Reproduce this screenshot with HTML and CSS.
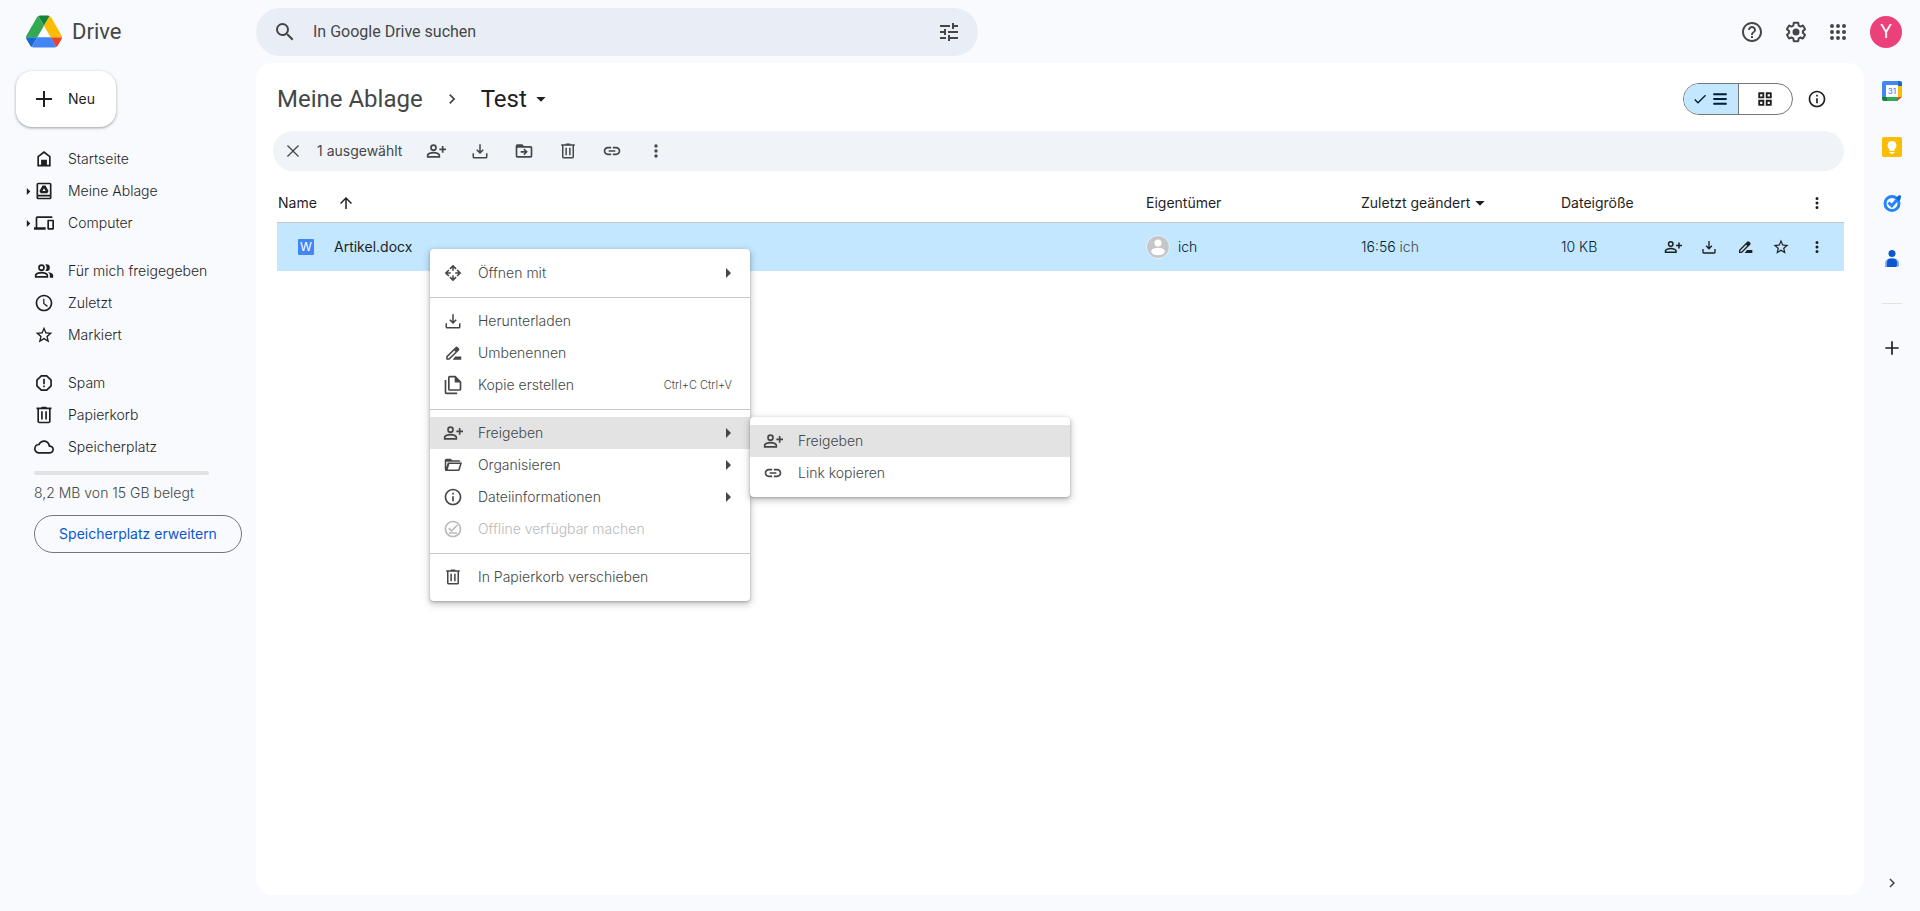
FILE: index.html
```html
<!DOCTYPE html>
<html lang="de">
<head>
<meta charset="utf-8">
<title>Test – Google Drive</title>
<link rel="stylesheet" href="styles.css">
</head>
<body>
<svg class="sprite" aria-hidden="true">
  <symbol id="search" viewBox="0 0 24 24"><path d="M15.5 14h-.79l-.28-.27A6.471 6.471 0 0 0 16 9.5 6.5 6.5 0 1 0 9.5 16c1.61 0 3.09-.59 4.23-1.57l.27.28v.79l5 4.99L20.49 19l-4.99-5zm-6 0C7.01 14 5 11.99 5 9.5S7.01 5 9.5 5 14 7.01 14 9.5 11.99 14 9.5 14z"/></symbol>
  <symbol id="tune" viewBox="0 0 24 24"><path d="M3 17v2h6v-2H3zM3 5v2h10V5H3zm10 16v-2h8v-2h-8v-2h-2v6h2zM7 9v2H3v2h4v2h2V9H7zm14 4v-2H11v2h10zm-6-4h2V7h4V5h-4V3h-2v6z"/></symbol>
  <symbol id="help" viewBox="0 0 24 24"><path d="M11 18h2v-2h-2v2zm1-16C6.48 2 2 6.48 2 12s4.48 10 10 10 10-4.48 10-10S17.52 2 12 2zm0 18c-4.41 0-8-3.59-8-8s3.59-8 8-8 8 3.59 8 8-3.59 8-8 8zm0-14c-2.21 0-4 1.79-4 4h2c0-1.1.9-2 2-2s2 .9 2 2c0 2-3 1.75-3 5h2c0-2.25 3-2.5 3-5 0-2.21-1.79-4-4-4z"/></symbol>
  <symbol id="settings" viewBox="0 0 24 24"><path d="M13.85 22.25h-3.7c-.74 0-1.36-.54-1.45-1.27l-.27-1.89c-.27-.14-.53-.29-.79-.46l-1.8.72c-.7.26-1.47-.03-1.81-.65L2.2 15.53c-.35-.66-.2-1.44.36-1.88l1.53-1.19c-.01-.15-.02-.3-.02-.46 0-.15.01-.31.02-.46l-1.52-1.19c-.59-.45-.74-1.26-.37-1.88l1.85-3.19c.34-.62 1.11-.9 1.79-.63l1.81.73c.26-.17.52-.32.78-.46l.27-1.91c.09-.7.71-1.25 1.44-1.25h3.7c.74 0 1.36.54 1.45 1.27l.27 1.89c.27.14.53.29.79.46l1.8-.72c.71-.26 1.48.03 1.82.65l1.84 3.18c.36.66.2 1.44-.36 1.88l-1.52 1.19c.01.15.02.3.02.46s-.01.31-.02.46l1.52 1.19c.56.45.72 1.23.37 1.86l-1.86 3.22c-.34.62-1.11.9-1.8.63l-1.8-.72c-.26.17-.52.32-.78.46l-.27 1.91c-.1.68-.72 1.22-1.46 1.22zm-3.23-2h2.76l.37-2.55.53-.22c.44-.18.88-.44 1.34-.78l.45-.34 2.38.96 1.38-2.4-2.03-1.58.07-.56c.03-.26.06-.51.06-.78s-.03-.53-.06-.78l-.07-.56 2.03-1.58-1.39-2.4-2.39.96-.45-.35c-.42-.32-.87-.58-1.33-.77l-.52-.22-.37-2.55h-2.76l-.37 2.55-.53.21c-.44.19-.88.44-1.34.79l-.45.33-2.38-.95-1.39 2.39 2.03 1.58-.07.56a7 7 0 0 0-.06.79c0 .26.02.53.06.78l.07.56-2.03 1.58 1.38 2.4 2.39-.96.45.35c.43.33.86.58 1.33.77l.53.22.38 2.55z"/><circle cx="12" cy="12" r="3.5"/></symbol>
  <symbol id="apps" viewBox="0 0 24 24"><path d="M6 8a2 2 0 1 0 0-4 2 2 0 0 0 0 4zm6 0a2 2 0 1 0 0-4 2 2 0 0 0 0 4zm6 0a2 2 0 1 0 0-4 2 2 0 0 0 0 4zM6 14a2 2 0 1 0 0-4 2 2 0 0 0 0 4zm6 0a2 2 0 1 0 0-4 2 2 0 0 0 0 4zm6 0a2 2 0 1 0 0-4 2 2 0 0 0 0 4zM6 20a2 2 0 1 0 0-4 2 2 0 0 0 0 4zm6 0a2 2 0 1 0 0-4 2 2 0 0 0 0 4zm6 0a2 2 0 1 0 0-4 2 2 0 0 0 0 4z"/></symbol>
  <symbol id="plus" viewBox="0 0 24 24"><path d="M20 13h-7v7h-2v-7H4v-2h7V4h2v7h7z"/></symbol>
  <symbol id="home" viewBox="0 0 24 24"><path fill-rule="evenodd" d="M12 2.5 4 8.7V21h16V8.700zM6 9.700 12 5l6 4.700V19H6zM8.500 13h7v6h-7z"/></symbol>
  <symbol id="mydrive" viewBox="0 0 24 24"><path fill-rule="evenodd" d="M19 2H5a2 2 0 0 0-2 2v16a2 2 0 0 0 2 2h14a2 2 0 0 0 2-2V4a2 2 0 0 0-2-2zm0 18H5v-1.500h14zm0-3.500H5V4h14zM10.300 5.500h3.400L17.500 12l-1.600 2.700H8.100L6.500 12zM12 8.800l-1.900 3.200h3.800z"/></symbol>
  <symbol id="devices" viewBox="0 0 24 24"><path d="M4 6h18V4H4c-1.100 0-2 .9-2 2v11H0v3h14v-3H4V6zm19 2h-6c-.55 0-1 .45-1 1v10c0 .55.45 1 1 1h6c.55 0 1-.45 1-1V9c0-.55-.45-1-1-1zm-1 10h-4v-8h4v8z"/></symbol>
  <symbol id="people" viewBox="0 0 24 24"><path fill-rule="evenodd" d="M9 12a4 4 0 1 0 0-8 4 4 0 0 0 0 8zm0-6a2 2 0 1 1 0 4 2 2 0 0 1 0-4zm0 7c-2.670 0-8 1.340-8 4v3h16v-3c0-2.660-5.330-4-8-4zm6 5H3v-.990C3.200 16.290 6.300 15 9 15s5.800 1.290 6 2zM15 12a4 4 0 0 0 0-8c-.470 0-.910.100-1.330.240a5.980 5.980 0 0 1 0 7.520c.420.140.860.240 1.330.240zm1.660 1.130C18.030 14.060 19 15.320 19 17v3h4v-3c0-2.180-3.580-3.470-6.340-3.870z"/></symbol>
  <symbol id="clock" viewBox="0 0 24 24"><path d="M11.990 2C6.470 2 2 6.480 2 12s4.470 10 9.990 10C17.520 22 22 17.520 22 12S17.520 2 11.990 2zM12 20c-4.420 0-8-3.580-8-8s3.580-8 8-8 8 3.580 8 8-3.580 8-8 8zm.5-13H11v6l4.700 3.700.9-1.300-4.100-3.150z"/></symbol>
  <symbol id="star" viewBox="0 0 24 24"><path d="M22 9.240l-7.190-.62L12 2 9.190 8.630 2 9.240l5.460 4.730L5.820 21 12 17.270 18.180 21l-1.630-7.030L22 9.240zM12 15.400l-3.760 2.270 1-4.280-3.320-2.880 4.380-.38L12 6.100l1.710 4.040 4.380.38-3.320 2.880 1 4.280L12 15.400z"/></symbol>
  <symbol id="spam" viewBox="0 0 24 24"><path fill-rule="evenodd" d="M8.400 2.500h7.200L21.500 8v8l-5.900 5.500H8.400L2.500 16V8zM9.200 4.500 4.500 9v6l4.700 4.500h5.600l4.700-4.500V9l-4.700-4.500zM11 7h2v6.500h-2zm0 8h2v2h-2z"/></symbol>
  <symbol id="trash" viewBox="0 0 24 24"><path fill-rule="evenodd" d="M15 3V2H9v1H3v2h1v14.500A2.500 2.500 0 0 0 6.500 22h11a2.500 2.500 0 0 0 2.500-2.500V5h1V3zm3 17H6V5h12zM8.500 7.500h2v10h-2zm5 0h2v10h-2z"/></symbol>
  <symbol id="cloud" viewBox="0 0 24 24"><path d="M19.350 10.040C18.670 6.590 15.640 4 12 4 9.110 4 6.600 5.640 5.350 8.040 2.340 8.360 0 10.910 0 14c0 3.310 2.690 6 6 6h13c2.760 0 5-2.240 5-5 0-2.640-2.050-4.780-4.650-4.960zM19 18H6c-2.210 0-4-1.790-4-4 0-2.050 1.530-3.760 3.560-3.970l1.070-.11.500-.95C8.080 7.140 9.940 6 12 6c2.620 0 4.880 1.860 5.390 4.430l.300 1.500 1.530.110c1.560.100 2.780 1.410 2.780 2.960 0 1.650-1.350 3-3 3z"/></symbol>
  <symbol id="chevron" viewBox="0 0 24 24"><path d="M10 6 8.590 7.410 13.170 12l-4.580 4.590L10 18l6-6z"/></symbol>
  <symbol id="down" viewBox="0 0 24 24"><path d="M5 9h14l-7 7z"/></symbol>
  <symbol id="right" viewBox="0 0 10 10"><path d="M4 0v10l5-5z"/></symbol>
  <symbol id="check" viewBox="0 0 24 24"><path d="M9 16.170 4.830 12l-1.420 1.410L9 19 21 7l-1.410-1.410z"/></symbol>
  <symbol id="list" viewBox="0 0 24 24"><path d="M4 5h16v2.500H4zm0 5.750h16v2.500H4zm0 5.750h16V19H4z"/></symbol>
  <symbol id="grid" viewBox="0 0 24 24"><path fill-rule="evenodd" d="M4 3h7v8H3V4a1 1 0 0 1 1-1zm1.500 2.500v3h3v-3zM13 3h7a1 1 0 0 1 1 1v7h-8zm2.500 2.500v3h3v-3zM3 13h8v8H4a1 1 0 0 1-1-1zm2.500 2.500v3h3v-3zM13 13h8v7a1 1 0 0 1-1 1h-7zm2.500 2.500v3h3v-3z"/></symbol>
  <symbol id="info" viewBox="0 0 24 24"><path d="M11 7h2v2h-2zm0 4h2v6h-2zm1-9C6.480 2 2 6.480 2 12s4.480 10 10 10 10-4.480 10-10S17.520 2 12 2zm0 18c-4.410 0-8-3.590-8-8s3.590-8 8-8 8 3.590 8 8-3.590 8-8 8z"/></symbol>
  <symbol id="close" viewBox="0 0 24 24"><path d="M20 5.200 18.800 4 12 10.800 5.200 4 4 5.200l6.800 6.800L4 18.800 5.200 20l6.800-6.800 6.800 6.800 1.200-1.200-6.800-6.800z"/></symbol>
  <symbol id="share" viewBox="0 0 24 24"><path fill-rule="evenodd" d="M9 12a4 4 0 1 0 0-8 4 4 0 0 0 0 8zm0-6a2 2 0 1 1 0 4 2 2 0 0 1 0-4zm0 7c-2.670 0-8 1.340-8 4v3h16v-3c0-2.660-5.330-4-8-4zm6 5H3v-.990C3.200 16.290 6.300 15 9 15s5.800 1.290 6 2zM19 6h2v3h3v2h-3v3h-2v-3h-3V9h3z"/></symbol>
  <symbol id="download" viewBox="0 0 24 24"><path d="m12 16-5-5 1.400-1.450 2.600 2.600V3h2v9.150l2.600-2.600L17 11zM4 20v-5H2v5a2 2 0 0 0 2 2h16a2 2 0 0 0 2-2v-5h-2v5z"/></symbol>
  <symbol id="move" viewBox="0 0 24 24"><path fill-rule="evenodd" d="M20 6h-8l-2-2H4a2 2 0 0 0-2 2v12a2 2 0 0 0 2 2h16a2 2 0 0 0 2-2V8a2 2 0 0 0-2-2zm0 12H4V8h16zm-7.500-9 4 4-4 4-1.300-1.300 1.700-1.700H8v-2h4.900l-1.700-1.700z"/></symbol>
  <symbol id="link" viewBox="0 0 24 24"><path d="M17 7h-4v2h4c1.650 0 3 1.350 3 3s-1.350 3-3 3h-4v2h4c2.760 0 5-2.240 5-5s-2.240-5-5-5zm-6 8H7c-1.650 0-3-1.350-3-3s1.350-3 3-3h4V7H7c-2.760 0-5 2.240-5 5s2.240 5 5 5h4v-2zm-3-4h8v2H8z"/></symbol>
  <symbol id="more" viewBox="0 0 24 24"><path d="M12 8a2 2 0 1 0 0-4 2 2 0 0 0 0 4zm0 2a2 2 0 1 0 0 4 2 2 0 0 0 0-4zm0 6a2 2 0 1 0 0 4 2 2 0 0 0 0-4z"/></symbol>
  <symbol id="up" viewBox="0 0 24 24"><path d="m4 12 1.410 1.410L11 7.830V20h2V7.830l5.580 5.590L20 12l-8-8z"/></symbol>
  <symbol id="rename" viewBox="0 0 24 24"><path fill-rule="evenodd" d="M15.200 4.200a2.300 2.300 0 0 1 3.200 0l1.400 1.400a2.300 2.300 0 0 1 0 3.200L7.300 21H3v-4.600zM13.700 8.500 5 17.200V19h1.500l8.800-8.800zM15 16.500h8V21H11.500z"/></symbol>
  <symbol id="openwith" viewBox="0 0 24 24"><path d="m12 1 4.800 4.800-1.500 1.500L13 5v4h-2V5L8.700 7.300 7.200 5.800zM1 12l4.800-4.800 1.500 1.500L5 11h4v2H5l2.300 2.300-1.500 1.500zm22 0-4.800 4.800-1.500-1.500L19 13h-4v-2h4l-2.300-2.300 1.500-1.500zM12 23l-4.800-4.800 1.500-1.500L11 19v-4h2v4l2.300-2.300 1.500 1.500z"/></symbol>
  <symbol id="copy" viewBox="0 0 24 24"><path fill-rule="evenodd" d="M15 1H8a2 2 0 0 0-2 2v14a2 2 0 0 0 2 2h12a2 2 0 0 0 2-2V8zm5 16H8V3h6v6h6zM2 6h2v15h13v2H4a2 2 0 0 1-2-2z"/></symbol>
  <symbol id="folder" viewBox="0 0 24 24"><path fill-rule="evenodd" d="M3 20a2 2 0 0 1-2-2V5.500a2 2 0 0 1 2-2h6l2 2h9a2 2 0 0 1 2 2H3V15l2-6.500h19L21 18.600a2 2 0 0 1-1.900 1.400zm2-2h14l2.300-7.500H7.200z"/></symbol>
  <symbol id="offline" viewBox="0 0 24 24"><path d="M12 2C6.500 2 2 6.500 2 12s4.500 10 10 10 10-4.500 10-10S17.500 2 12 2zm0 18c-4.420 0-8-3.580-8-8s3.580-8 8-8 8 3.580 8 8-3.580 8-8 8zm4.600-13.500L10.200 12.900 7.600 10.300 6.200 11.700l4 4L18 7.900zM7 15.800h10v2H7z"/></symbol>
</svg>

<header class="topbar">
  <a class="brand" href="#">
    <svg class="logo" viewBox="0 0 87.300 78" aria-hidden="true">
      <path d="M6.600 66.850l3.850 6.650c.8 1.400 1.950 2.500 3.300 3.300l13.750-23.800h-27.500c0 1.550.4 3.100 1.200 4.500z" fill="#1967d2"/>
      <path d="M43.650 25l-13.750-23.800c-1.350.8-2.500 1.900-3.300 3.300l-25.400 44a9.060 9.060 0 0 0-1.200 4.500h27.500z" fill="#34a853"/>
      <path d="M73.550 76.800c1.350-.8 2.500-1.900 3.300-3.300l1.600-2.750 7.650-13.250c.8-1.400 1.200-2.950 1.200-4.500h-27.500l5.850 11.500z" fill="#ea4335"/>
      <path d="M43.650 25l13.750-23.800c-1.350-.8-2.900-1.200-4.500-1.200h-18.500c-1.600 0-3.150.45-4.500 1.200z" fill="#188038"/>
      <path d="M59.800 53h-32.300l-13.750 23.800c1.350.8 2.900 1.200 4.500 1.200h50.800c1.600 0 3.150-.45 4.500-1.200z" fill="#4285f4"/>
      <path d="M73.400 26.500l-12.700-22c-.8-1.400-1.950-2.500-3.300-3.300l-13.750 23.800 16.150 28h27.450c0-1.550-.4-3.100-1.200-4.500z" fill="#fbbc04"/>
    </svg>
    <span>Drive</span>
  </a>
  <form class="search" role="search">
    <button type="button" class="icon-btn" aria-label="Suchen"><svg class="i24"><use href="#search"/></svg></button>
    <input type="search" aria-label="In Google Drive suchen" placeholder="In Google Drive suchen">
    <button type="button" class="icon-btn" aria-label="Suchoptionen"><svg class="i24"><use href="#tune"/></svg></button>
  </form>
  <div class="account">
    <button class="icon-btn" aria-label="Hilfe"><svg class="i24"><use href="#help"/></svg></button>
    <button class="icon-btn" aria-label="Einstellungen"><svg class="i24"><use href="#settings"/></svg></button>
    <button class="icon-btn narrow" aria-label="Google-Apps"><svg class="i24"><use href="#apps"/></svg></button>
    <button class="avatar">Y</button>
  </div>
</header>

<div class="frame">
  <aside class="sidebar">
    <button class="new-btn"><svg class="i24"><use href="#plus"/></svg>Neu</button>
    <nav class="nav">
      <ul>
        <li><a href="#"><i></i><svg class="i20"><use href="#home"/></svg>Startseite</a></li>
        <li><a href="#"><svg class="tick"><use href="#right"/></svg><svg class="i20"><use href="#mydrive"/></svg>Meine Ablage</a></li>
        <li><a href="#"><svg class="tick"><use href="#right"/></svg><svg class="i20"><use href="#devices"/></svg>Computer</a></li>
      </ul>
      <ul>
        <li><a href="#"><i></i><svg class="i20"><use href="#people"/></svg>Für mich freigegeben</a></li>
        <li><a href="#"><i></i><svg class="i20"><use href="#clock"/></svg>Zuletzt</a></li>
        <li><a href="#"><i></i><svg class="i20"><use href="#star"/></svg>Markiert</a></li>
      </ul>
      <ul>
        <li><a href="#"><i></i><svg class="i20"><use href="#spam"/></svg>Spam</a></li>
        <li><a href="#"><i></i><svg class="i20"><use href="#trash"/></svg>Papierkorb</a></li>
        <li><a href="#"><i></i><svg class="i20"><use href="#cloud"/></svg>Speicherplatz</a></li>
      </ul>
    </nav>
    <div class="storage">
      <div class="meter"></div>
      <p>8,2 MB von 15 GB belegt</p>
      <button class="upgrade">Speicherplatz erweitern</button>
    </div>
  </aside>

  <main class="content">
    <div class="titlebar">
      <nav class="crumbs">
        <a href="#">Meine Ablage</a>
        <svg class="i20 sep"><use href="#chevron"/></svg>
        <button class="current">Test<svg class="i16"><use href="#down"/></svg></button>
      </nav>
      <div class="views">
        <button class="on" aria-label="Listenlayout"><svg class="i16"><use href="#check"/></svg><svg class="i20"><use href="#list"/></svg></button>
        <button aria-label="Rasterlayout"><svg class="i18"><use href="#grid"/></svg></button>
      </div>
      <button class="icon-btn dark" aria-label="Details ansehen"><svg class="i20"><use href="#info"/></svg></button>
    </div>

    <div class="selection">
      <button class="icon-btn clear" aria-label="Auswahl aufheben"><svg class="i18"><use href="#close"/></svg></button>
      <span class="count">1 ausgewählt</span>
      <div class="tools">
        <button class="icon-btn" aria-label="Freigeben"><svg class="i20"><use href="#share"/></svg></button>
        <button class="icon-btn" aria-label="Herunterladen"><svg class="i18"><use href="#download"/></svg></button>
        <button class="icon-btn" aria-label="Verschieben"><svg class="i20"><use href="#move"/></svg></button>
        <button class="icon-btn" aria-label="In Papierkorb verschieben"><svg class="i18"><use href="#trash"/></svg></button>
        <button class="icon-btn" aria-label="Link kopieren"><svg class="i20"><use href="#link"/></svg></button>
        <button class="icon-btn" aria-label="Weitere Aktionen"><svg class="i20"><use href="#more"/></svg></button>
      </div>
    </div>

    <table class="files">
      <colgroup><col><col class="c-owner"><col class="c-date"><col class="c-size"><col class="c-actions"></colgroup>
      <thead>
        <tr>
          <th><div class="cell head-name">Name<svg class="i18"><use href="#up"/></svg></div></th>
          <th>Eigentümer</th>
          <th><div class="cell sorted">Zuletzt geändert<svg class="i16"><use href="#down"/></svg></div></th>
          <th>Dateigröße</th>
          <th><div class="cell actions"><button class="row-btn" aria-label="Weitere Optionen"><svg class="i18"><use href="#more"/></svg></button></div></th>
        </tr>
      </thead>
      <tbody>
        <tr>
          <td><div class="cell file"><span class="word">W</span>Artikel.docx</div></td>
          <td><div class="cell owner"><svg class="face" viewBox="0 0 24 24" aria-hidden="true"><circle cx="12" cy="12" r="11.500" fill="#c4c7c9" stroke="#e8f3fb"/><circle cx="12" cy="8" r="3.600" fill="#fff"/><ellipse cx="12" cy="16.500" rx="6.800" ry="3.800" fill="#fff"/></svg>ich</div></td>
          <td>16:56 <span class="by">ich</span></td>
          <td>10 KB</td>
          <td><div class="cell actions">
            <button class="row-btn" aria-label="Freigeben"><svg class="i18"><use href="#share"/></svg></button>
            <button class="row-btn" aria-label="Herunterladen"><svg class="i16"><use href="#download"/></svg></button>
            <button class="row-btn" aria-label="Umbenennen"><svg class="i16"><use href="#rename"/></svg></button>
            <button class="row-btn" aria-label="Markieren"><svg class="i18"><use href="#star"/></svg></button>
            <button class="row-btn" aria-label="Weitere Aktionen"><svg class="i18"><use href="#more"/></svg></button>
          </div></td>
        </tr>
      </tbody>
    </table>

    <div class="menu context" role="menu">
      <button role="menuitem"><svg class="i18"><use href="#openwith"/></svg><span>Öffnen mit</span><svg class="arrow"><use href="#right"/></svg></button>
      <hr>
      <button role="menuitem"><svg class="i18"><use href="#download"/></svg><span>Herunterladen</span></button>
      <button role="menuitem"><svg class="i18"><use href="#rename"/></svg><span>Umbenennen</span></button>
      <button role="menuitem"><svg class="i20"><use href="#copy"/></svg><span>Kopie erstellen</span><kbd>Ctrl+C Ctrl+V</kbd></button>
      <hr>
      <button role="menuitem" class="hover"><svg class="i20"><use href="#share"/></svg><span>Freigeben</span><svg class="arrow"><use href="#right"/></svg></button>
      <button role="menuitem"><svg class="i18"><use href="#folder"/></svg><span>Organisieren</span><svg class="arrow"><use href="#right"/></svg></button>
      <button role="menuitem"><svg class="i20"><use href="#info"/></svg><span>Dateiinformationen</span><svg class="arrow"><use href="#right"/></svg></button>
      <button role="menuitem" disabled><svg class="i20"><use href="#offline"/></svg><span>Offline verfügbar machen</span></button>
      <hr>
      <button role="menuitem"><svg class="i18"><use href="#trash"/></svg><span>In Papierkorb verschieben</span></button>
    </div>
    <div class="menu submenu" role="menu">
      <button role="menuitem" class="hover"><svg class="i20"><use href="#share"/></svg><span>Freigeben</span></button>
      <button role="menuitem"><svg class="i20"><use href="#link"/></svg><span>Link kopieren</span></button>
    </div>
  </main>

  <aside class="rail">
    <button aria-label="Kalender"><svg class="i20" viewBox="0 0 20 20"><path fill="#4285f4" d="M2 0h14v5H5v11H0V2a2 2 0 0 1 2-2z"/><path fill="#1967d2" d="M16 0h2a2 2 0 0 1 2 2v3h-4z"/><path fill="#fbbc04" d="M15 5h5v11h-5z"/><path fill="#34a853" d="M5 15h11v5H5z"/><path fill="#188038" d="M0 16h5v4H2a2 2 0 0 1-2-2z"/><path fill="#ea4335" d="M15 16h5l-5 4z"/><path fill="#fff" d="M4 4h12v12H4z"/><text x="10" y="13" text-anchor="middle" class="cal">31</text></svg></button>
    <button aria-label="Notizen"><svg class="i20" viewBox="0 0 20 20"><rect width="20" height="20" rx="2" fill="#fbbc04"/><path fill="#fff" d="M10 4a4.500 4.500 0 0 0-2.500 8.200V14h5v-1.800A4.500 4.500 0 0 0 10 4zM7.500 15h5v1h-1.200v.8H8.700V16H7.500z"/></svg></button>
    <button aria-label="Aufgaben"><svg class="i20" viewBox="0 0 20 20"><circle cx="10" cy="10.500" r="7" fill="none" stroke="#2684fc" stroke-width="3"/><path fill="none" stroke="#2684fc" stroke-width="3" d="m6.500 9.500 3.300 3.300 7-8"/><path fill="#0066da" d="m14 5 2.800-2.800 2.400.6-.8 3.700-2 1.500z"/></svg></button>
    <button aria-label="Kontakte"><svg class="i20" viewBox="0 0 20 20"><circle cx="10" cy="4.500" r="3.500" fill="#0b57d0"/><path fill="#7baaf7" d="M3 18v-3.500A5 5 0 0 1 8 9.500h4a5 5 0 0 1 5 5V16a2 2 0 0 1-2 2z"/><path fill="#0b57d0" d="M5 18v-4.500a4 4 0 0 1 4-4h3a4 4 0 0 1 3 3.500v3a2 2 0 0 1-2 2z"/></svg></button>
    <hr>
    <button class="add" aria-label="Add-ons abrufen"><svg class="i20"><use href="#plus"/></svg></button>
    <button class="collapse" aria-label="Seitenleiste ausblenden"><svg class="i18"><use href="#chevron"/></svg></button>
  </aside>
</div>
</body>
</html>
```
FILE: styles.css
```css
* { box-sizing: border-box; }

body {
  margin: 0;
  min-height: 100vh;
  display: flex;
  flex-direction: column;
  background: #f8fafd;
  color: #1f1f1f;
  font: 300 14px/20px Inter, Roboto, "Liberation Sans", sans-serif;
}

.sprite { display: none; }
svg { fill: currentColor; flex: none; display: block; }
.i16 { width: 16px; height: 16px; }
.i18 { width: 18px; height: 18px; }
.i20 { width: 20px; height: 20px; }
.i24 { width: 24px; height: 24px; }

button {
  border: 0;
  padding: 0;
  background: none;
  font: inherit;
  color: inherit;
}
a { color: inherit; text-decoration: none; }
ul { list-style: none; margin: 0; padding: 0; }

.icon-btn {
  width: 44px;
  height: 40px;
  display: grid;
  place-items: center;
  flex: none;
  color: #444746;
}
.icon-btn.narrow { width: 40px; }
.icon-btn.dark { color: #1f1f1f; }

/* Top bar */
.topbar {
  height: 63px;
  display: flex;
  align-items: center;
}
.brand {
  width: 256px;
  flex: none;
  padding-left: 26px;
  display: flex;
  align-items: center;
  gap: 10px;
  font: 400 22px/28px Roboto, "Liberation Sans", sans-serif;
  color: #444746;
}
.logo { width: 36px; height: 33px; }
.search {
  flex: 0 1 722px;
  height: 48px;
  padding: 0 7px 0 7px;
  border-radius: 24px;
  background: #e9eef6;
  display: flex;
  align-items: center;
}
.search input {
  flex: 1;
  min-width: 0;
  border: 0;
  padding: 0 6px;
  background: none;
  font: 400 16px/24px Roboto, "Liberation Sans", sans-serif;
  color: #1f1f1f;
}
.search input::placeholder { color: #444746; opacity: 1; }
.account {
  margin-left: auto;
  padding-right: 18px;
  display: flex;
  align-items: center;
}
.avatar {
  width: 32px;
  height: 32px;
  margin-left: 12px;
  border-radius: 50%;
  background: #ec407a;
  color: #fff;
  font-size: 18px;
  font-weight: 400;
}

/* Page frame */
.frame { flex: 1; display: flex; }

.sidebar { width: 256px; flex: none; padding-top: 8px; }
.new-btn {
  width: 100px;
  height: 56px;
  margin-left: 16px;
  padding-left: 16px;
  border-radius: 16px;
  background: #fff;
  box-shadow: 0 1px 2px rgba(60, 64, 67, .3), 0 1px 3px 1px rgba(60, 64, 67, .15);
  display: flex;
  align-items: center;
  gap: 12px;
  font-weight: 400;
}
.nav { padding: 16px 0 0 24px; display: grid; gap: 16px; }
.nav a {
  height: 32px;
  display: grid;
  grid-template-columns: 8px 36px 1fr;
  align-items: center;
}
.nav a .i20 { margin-left: 2px; }
.nav .tick { width: 7px; height: 7px; }
.storage { padding: 8px 14px 0 34px; color: #444746; }
.meter { width: 175px; height: 4px; border-radius: 2px; background: #e1e3e1; }
.storage p { margin: 8px 0 12px; }
.upgrade {
  width: 100%;
  height: 38px;
  border: 1px solid #747775;
  border-radius: 19px;
  color: #0b57d0;
  font-weight: 400;
}

/* Main panel */
.content {
  position: relative;
  flex: 1;
  min-width: 0;
  margin-bottom: 16px;
  padding: 16px 20px 0 17px;
  border-radius: 16px;
  background: #fff;
}
.titlebar { height: 40px; padding-right: 5px; display: flex; align-items: center; }
.crumbs {
  flex: 1;
  padding-left: 4px;
  display: flex;
  align-items: center;
  font: 400 24px/32px Roboto, "Liberation Sans", sans-serif;
  color: #444746;
}
.sep { margin: 0 19px; }
.current { display: flex; align-items: center; gap: 6px; color: #1f1f1f; }
.views {
  width: 110px;
  height: 32px;
  margin-right: 2px;
  border: 1px solid #747775;
  border-radius: 16px;
  overflow: hidden;
  display: flex;
}
.views button { flex: 1; display: flex; align-items: center; justify-content: center; gap: 2px; }
.views .on { background: #c2e7ff; border-right: 1px solid #747775; color: #001d35; }

.selection {
  height: 40px;
  margin-top: 12px;
  border-radius: 20px;
  background: #f0f4f9;
  display: flex;
  align-items: center;
  color: #444746;
}
.clear { width: 40px; }
.count { width: 97px; padding-left: 4px; font-weight: 400; white-space: nowrap; }
.tools { margin-left: 4px; display: flex; }

.files {
  width: calc(100% - 4px);
  margin-left: 4px;
  table-layout: fixed;
  border-collapse: collapse;
  text-align: left;
}
.c-owner { width: 215px; }
.c-date { width: 200px; }
.c-size { width: 94px; }
.c-actions { width: 189px; }
.files th { height: 51px; padding: 13px 0 0; border-bottom: 1px solid #c4c7c5; font-weight: 400; }
.files td { height: 49px; padding: 0; background: #c2e7ff; color: #001d35; }
.cell { display: flex; align-items: center; }
.head-name { padding-left: 1px; gap: 20px; }
.sorted { gap: 2px; }
.actions { justify-content: flex-end; padding-right: 9px; color: #1f1f1f; }
.row-btn { width: 36px; height: 24px; display: grid; place-items: center; }
.file { padding-left: 21px; gap: 20px; color: #1f1f1f; font-weight: 400; }
.word {
  width: 16px;
  height: 16px;
  border-radius: 1px;
  background: #4285f4;
  color: #fff;
  font-size: 12px;
  line-height: 16px;
  text-align: center;
}
.owner { gap: 8px; }
.face { width: 24px; height: 24px; }
.by { color: #444746; }

/* Menus float above the file list */
.menu {
  position: absolute;
  width: 320px;
  padding: 8px 0;
  border-radius: 4px;
  background: #fff;
  color: #444746;
  box-shadow: 0 1px 3px rgba(60, 64, 67, .35), 0 3px 7px 1px rgba(60, 64, 67, .25);
}
.context { left: 174px; top: 186px; }
.submenu { left: 494px; top: 354px; }
.menu button {
  width: 100%;
  height: 32px;
  padding: 0 18px 0 11px;
  display: grid;
  grid-template-columns: 24px 1fr auto;
  column-gap: 13px;
  align-items: center;
  justify-items: center;
  text-align: left;
}
.menu span { justify-self: start; }
.menu hr { height: 1px; margin: 8px 0 7px; border: 0; background: #c4c7c5; }
.menu .hover { background: #e3e3e3; }
.menu button:disabled { color: #b8b9b9; }
.menu kbd { font: inherit; font-size: 11px; }
.arrow { width: 10px; height: 10px; }

/* App rail */
.rail { width: 56px; flex: none; display: flex; flex-direction: column; align-items: center; padding-bottom: 8px; }
.rail button { width: 40px; height: 56px; display: grid; place-items: center; }
.rail hr { width: 20px; height: 1px; margin: 16px 0; border: 0; background: #e1e3e1; }
.rail .collapse { height: 40px; margin-top: auto; color: #444746; }
.cal { font-size: 8px; font-weight: 500; fill: #4285f4; }
```
